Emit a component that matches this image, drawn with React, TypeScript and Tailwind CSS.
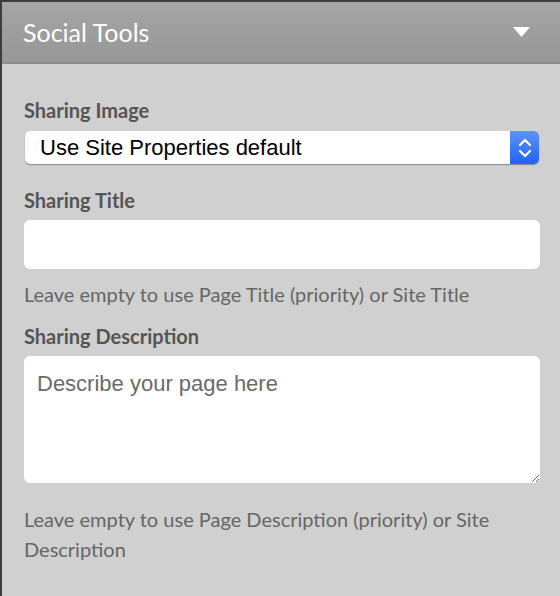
import React from 'react';

const SocialTools: React.FC = () => {
  return (
    <div className="w-[560px] h-[596px] bg-[#d0d0d0] border-l-2 border-t-2 border-[#3d3d3d] font-['Lato',sans-serif] overflow-hidden">
      {/* Header */}
      <div className="h-[62px] bg-gradient-to-b from-[#a5a5a5] to-[#979797] border-b-2 border-[#8b8b8b] flex items-center justify-between pl-[21px] pr-[30px]">
        <h2 className="text-[25px] text-white leading-none">Social Tools</h2>
        <svg width="17" height="11" viewBox="0 0 17 11">
          <polygon points="0,0 17,0 8.5,10" fill="#ffffff" />
        </svg>
      </div>

      {/* Body */}
      <div className="pl-[22px] pr-[20px] pt-[34px]">
        <label className="block text-[20px] font-bold text-[#555555] leading-6">Sharing Image</label>
        <div className="mt-[9px] ml-[1px] mr-[1px] h-[33px] bg-white rounded-[5px] shadow-[0_1px_1px_rgba(0,0,0,0.35)] flex items-center overflow-hidden">
          <span className="flex-1 pl-[15px] text-[22px] text-black leading-none font-['Liberation_Sans',Arial,sans-serif]">
            Use Site Properties default
          </span>
          <div className="w-[29px] h-full bg-gradient-to-b from-[#5c93f5] to-[#2360f5] flex items-center justify-center">
            <svg width="14" height="22" viewBox="0 0 14 22" fill="none" stroke="#ffffff" strokeWidth="2.2" strokeLinecap="round" strokeLinejoin="round">
              <polyline points="2,8 7,3 12,8" />
              <polyline points="2,14 7,19 12,14" />
            </svg>
          </div>
        </div>

        <label className="block mt-[24px] text-[20px] font-bold text-[#555555] leading-6">Sharing Title</label>
        <input
          type="text"
          className="block mt-[8px] w-full h-[49px] bg-white rounded-[6px] outline-none px-3"
        />
        <p className="mt-[13px] text-[20px] text-[#666666] leading-6">
          Leave empty to use Page Title (priority) or Site Title
        </p>

        <label className="block mt-[18px] text-[20px] font-bold text-[#555555] leading-6">Sharing Description</label>
        <textarea
          placeholder="Describe your page here"
          className="block mt-[8px] w-full h-[127px] bg-white rounded-[6px] outline-none px-[13px] py-[11px] text-[22px] text-black placeholder:text-[#6b6b6b] font-['Liberation_Sans',Arial,sans-serif] resize-y"
        />
        <p className="mt-[21px] text-[20px] text-[#666666] leading-[30px]">
          Leave empty to use Page Description (priority) or Site Description
        </p>
      </div>
    </div>
  );
};

export default function App() {
  return <SocialTools />;
}
